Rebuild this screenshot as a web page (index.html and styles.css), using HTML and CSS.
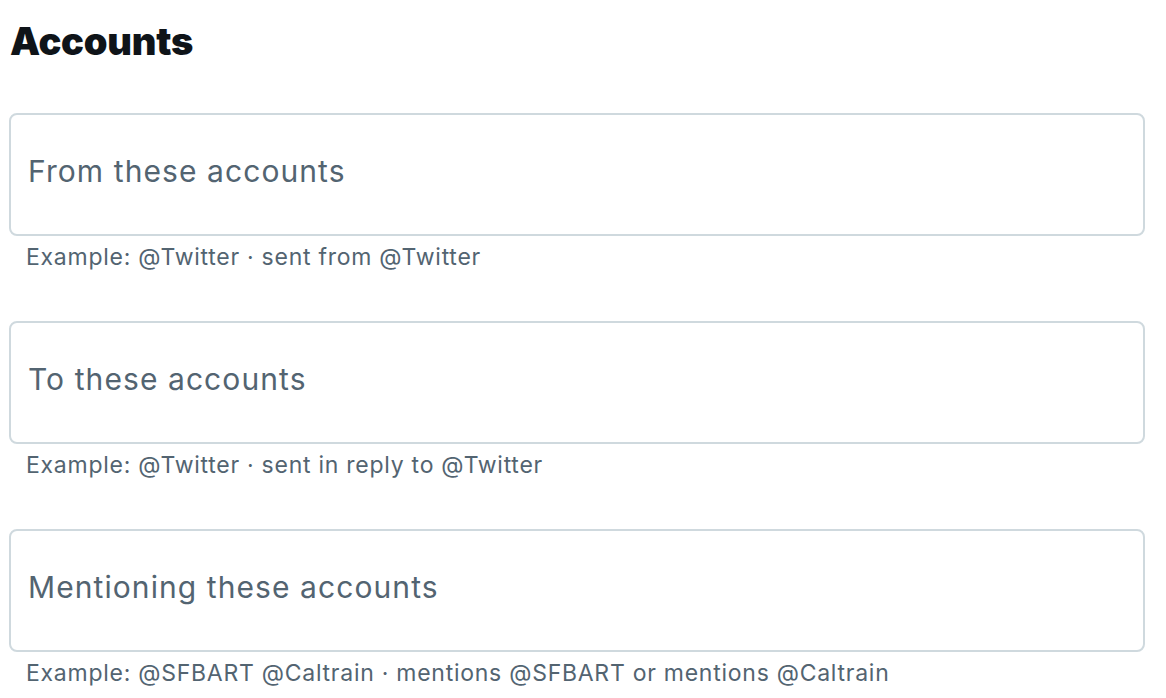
FILE: index.html
```html
<!DOCTYPE html>
<html lang="en">
<head>
<meta charset="utf-8">
<title>Accounts</title>
<link rel="stylesheet" href="styles.css">
</head>
<body>
<main class="page">
  <h2 class="title">Accounts</h2>
  <div class="field">
    <div class="box"><span class="placeholder">From these accounts</span></div>
    <div class="hint">Example: @Twitter · sent from @Twitter</div>
  </div>
  <div class="field">
    <div class="box"><span class="placeholder">To these accounts</span></div>
    <div class="hint">Example: @Twitter · sent in reply to @Twitter</div>
  </div>
  <div class="field">
    <div class="box"><span class="placeholder">Mentioning these accounts</span></div>
    <div class="hint">Example: @SFBART @Caltrain · mentions @SFBART or mentions @Caltrain</div>
  </div>
</main>
</body>
</html>
```

FILE: styles.css
```css
html, body {
  margin: 0;
  padding: 0;
  background: #ffffff;
}
body {
  font-family: Inter, "Noto Sans", "Liberation Sans", sans-serif;
  color: #536471;
}
.page {
  padding: 18px 21px 0 9px;
  display: flex;
  flex-direction: column;
  gap: 49px;
}
.title {
  margin: 0;
  font-size: 38px;
  line-height: 46px;
  font-weight: 900;
  color: #0f1419;
  padding-left: 1px;
  letter-spacing: -0.2px;
}
.field {
  display: flex;
  flex-direction: column;
}
.box {
  box-sizing: border-box;
  height: 123px;
  border: 2px solid #cfd9de;
  border-radius: 8px;
  padding: 39px 17px 0;
}
.placeholder {
  display: block;
  font-size: 30px;
  line-height: 34px;
  letter-spacing: 1.08px;
  color: #536471;
}
.hint {
  margin-top: 6px;
  padding-left: 17px;
  font-size: 23px;
  line-height: 30px;
  letter-spacing: 0.74px;
  color: #536471;
}
```
